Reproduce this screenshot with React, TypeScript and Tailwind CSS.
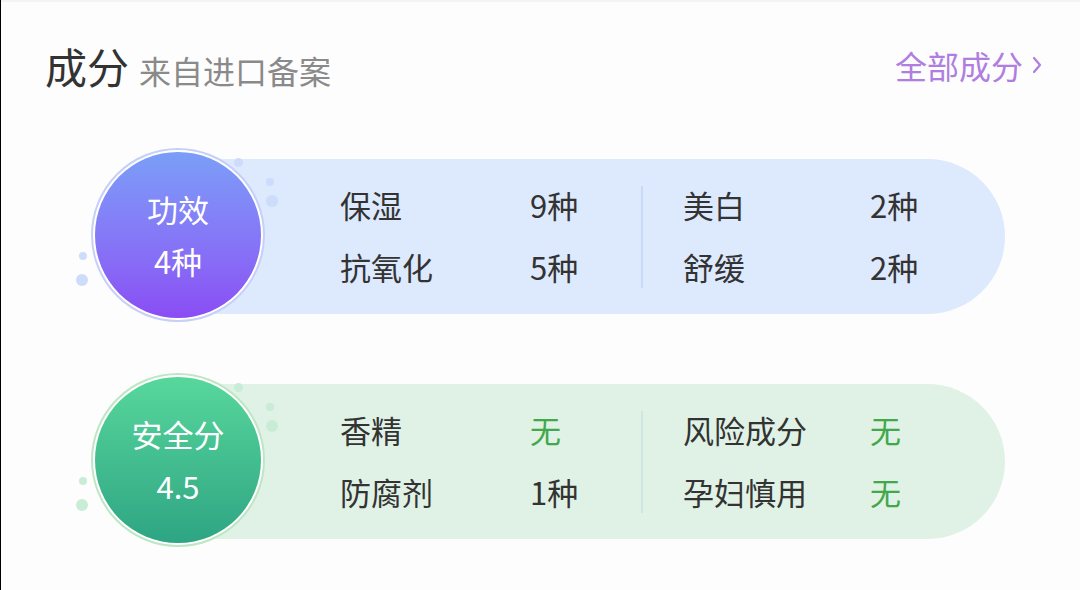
import React from "react";

type Item = { label: string; value: string; good?: boolean };

const font = { fontFamily: '"Noto Sans CJK SC", "Noto Sans", sans-serif' };

function Dots({ color }: { color: string }) {
  return (
    <>
      <span className={`absolute left-[143px] top-[10px] h-[9px] w-[9px] rounded-full ${color}`} />
      <span className={`absolute left-[175px] top-[30px] h-[8px] w-[8px] rounded-full ${color}`} />
      <span className={`absolute left-[175px] top-[47px] h-[12px] w-[12px] rounded-full ${color}`} />
      <span className={`absolute left-[-12px] top-[104px] h-[8px] w-[8px] rounded-full ${color}`} />
      <span className={`absolute left-[-15px] top-[126px] h-[12px] w-[12px] rounded-full ${color}`} />
    </>
  );
}

function Column({ items, labelWidth, className }: { items: Item[]; labelWidth: string; className: string }) {
  return (
    <div className={`flex flex-col ${className}`}>
      {items.map((it) => (
        <div key={it.label} className="flex h-[62px] items-center">
          <span className={`${labelWidth} text-[#333333]`}>{it.label}</span>
          <span className={it.good ? "text-[#43a84c]" : "text-[#333333]"}>{it.value}</span>
        </div>
      ))}
    </div>
  );
}

function Section({
  kind,
  title,
  score,
  left,
  right,
}: {
  kind: "blue" | "green";
  title: string;
  score: string;
  left: Item[];
  right: Item[];
}) {
  const blue = kind === "blue";
  return (
    <div className="flex items-center">
      <div className="relative z-10">
        <Dots color={blue ? "bg-[#cddcfb]" : "bg-[#c9ecd6]"} />
        <div
          className={`h-[174px] w-[174px] rounded-full border-2 p-[2px] bg-white ${
            blue ? "border-[#c6cff8]" : "border-[#bfe6c4]"
          }`}
        >
          <div
            className={`flex h-full w-full flex-col items-center justify-center rounded-full text-[31px] leading-[52px] text-white ${
              blue
                ? "bg-gradient-to-b from-[#7a9ef8] to-[#8a4cf4]"
                : "bg-gradient-to-b from-[#57d79c] to-[#2ea583]"
            }`}
          >
            <span>{title}</span>
            <span>{score}</span>
          </div>
        </div>
      </div>
      <div
        className={`-ml-[50px] mt-[3px] flex h-[155px] w-[790px] items-center rounded-r-full pl-[125px] text-[31px] ${
          blue ? "bg-[#dde9fd]" : "bg-[#e0f2e5]"
        }`}
      >
        <Column items={left} labelWidth="w-[190px]" className="w-[301px]" />
        <div className={`h-[102px] w-[2px] ${blue ? "bg-[#c9daf6]" : "bg-[#cfe6e2]"}`} />
        <Column items={right} labelWidth="w-[187px]" className="pl-[40px]" />
      </div>
    </div>
  );
}

export default function App() {
  return (
    <div className="h-[590px] w-[1080px] overflow-hidden border-l border-black bg-[#fdfdfd]" style={font}>
      <div className="h-[2px] bg-[#f4f4f4]" />
      <div className="mt-[33px] flex h-[60px] items-center justify-between pl-[44px] pr-[38px]">
        <div className="flex items-baseline">
          <span className="text-[42px] text-[#333333]">成分</span>
          <span className="ml-[10px] text-[32px] text-[#8a8a8a]">来自进口备案</span>
        </div>
        <div className="flex items-center text-[32px] text-[#b07ee0]">
          <span>全部成分</span>
          <svg className="ml-[9px]" width="10" height="18" viewBox="0 0 10 18" fill="none">
            <path d="M2 2 L8 9 L2 16" stroke="#b07ee0" strokeWidth="2.2" strokeLinecap="round" strokeLinejoin="round" />
          </svg>
        </div>
      </div>
      <div className="flex flex-col gap-[51px] pl-[90px] pt-[53px]">
        <Section
          kind="blue"
          title="功效"
          score="4种"
          left={[
            { label: "保湿", value: "9种" },
            { label: "抗氧化", value: "5种" },
          ]}
          right={[
            { label: "美白", value: "2种" },
            { label: "舒缓", value: "2种" },
          ]}
        />
        <Section
          kind="green"
          title="安全分"
          score="4.5"
          left={[
            { label: "香精", value: "无", good: true },
            { label: "防腐剂", value: "1种" },
          ]}
          right={[
            { label: "风险成分", value: "无", good: true },
            { label: "孕妇慎用", value: "无", good: true },
          ]}
        />
      </div>
    </div>
  );
}
